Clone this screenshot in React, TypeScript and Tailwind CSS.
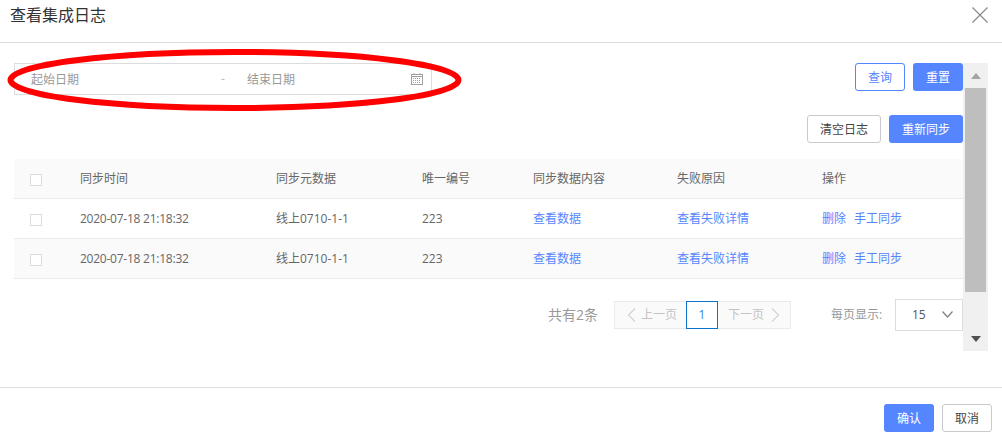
const FONT = "[font-family:'Open_Sans','Noto_Sans_CJK_SC',sans-serif]";

const ROWS = [
  { time: '2020-07-18 21:18:32', meta: '线上0710-1-1', code: '223', striped: false },
  { time: '2020-07-18 21:18:32', meta: '线上0710-1-1', code: '223', striped: true },
];

function Checkbox() {
  return <span className="mt-[2px] block size-3 border border-[#dcdcdc] bg-white" />;
}

function Button({ label, kind, width }: { label: string; kind: 'primary' | 'outline' | 'plain'; width: string }) {
  const look =
    kind === 'primary'
      ? 'bg-[#5586ff] text-white'
      : kind === 'outline'
        ? 'border border-[#5586ff] bg-white text-[#5586ff]'
        : 'border border-[#c8cad0] bg-white text-[#444]';
  return (
    <button className={`flex h-7 items-center justify-center rounded-[3px] pt-px text-xs ${width} ${look}`}>{label}</button>
  );
}

function CalendarIcon() {
  return (
    <svg className="shrink-0" width="12" height="12" viewBox="0 0 12 12" fill="none" stroke="#a0a0a0">
      <rect x="0.5" y="1.5" width="11" height="10" />
      <path d="M0.5 3.5h11M3 0v2M9 0v2" />
      <path d="M2 5.5h8M2 7.5h8M2 9.5h8" strokeDasharray="1 1" />
    </svg>
  );
}

function Scrollbar() {
  return (
    <div className="flex h-[288px] w-[25px] shrink-0 flex-col items-center bg-[#f0f0f0]">
      <div className="flex h-[25px] w-full items-center justify-center">
        <span className="border-x-[5.5px] border-b-[6px] border-x-transparent border-b-[#a3a3a3]" />
      </div>
      <div className="h-[204px] w-[21px] bg-[#bebebe]" />
      <div className="flex-1" />
      <div className="flex h-[25px] w-full items-center justify-center">
        <span className="border-x-[5.5px] border-t-[6px] border-x-transparent border-t-[#505050]" />
      </div>
    </div>
  );
}

export default function App() {
  return (
    <div className={`relative flex h-[442px] w-[1002px] flex-col overflow-hidden bg-white ${FONT}`}>
      <header className="flex h-[43px] shrink-0 items-start justify-between border-b border-[#dddddd] pl-[10px] pr-[14px]">
        <h1 className="pt-[3px] text-base leading-6 text-[#333]">查看集成日志</h1>
        <svg className="mt-[7px]" width="16" height="16" viewBox="0 0 16 16" fill="none" stroke="#8c8c8c" strokeWidth="1.3">
          <path d="M0.5 0.5l15 15M15.5 0.5l-15 15" />
        </svg>
      </header>

      <main className="flex flex-1 pl-[14px] pt-[20px]">
        <div className="w-[949px]">
          <div className="flex items-start justify-between">
            <div className="flex h-8 w-[418px] items-center border border-[#dddddd] pl-4 pr-2 text-xs text-[#999]">
              <span className="w-[190px] pt-px">起始日期</span>
              <span className="w-[26px] text-[#bbb]">-</span>
              <span className="flex-1 pt-px">结束日期</span>
              <CalendarIcon />
            </div>
            <div className="flex gap-2">
              <Button label="查询" kind="outline" width="w-[50px]" />
              <Button label="重置" kind="primary" width="w-[50px]" />
            </div>
          </div>

          <div className="mt-5 flex justify-end gap-2">
            <Button label="清空日志" kind="plain" width="w-[74px]" />
            <Button label="重新同步" kind="primary" width="w-[74px]" />
          </div>

          <table className="mt-4 w-full table-fixed border-collapse text-xs text-[#666]">
            <colgroup>
              <col className="w-[66px]" />
              <col className="w-[196px]" />
              <col className="w-[146px]" />
              <col className="w-[111px]" />
              <col className="w-[144px]" />
              <col className="w-[145px]" />
              <col />
            </colgroup>
            <thead>
              <tr className="h-[39px] border-b border-[#eaeaea] bg-[#fafafa] text-left [&>th]:pt-[2px]">
                <th className="pl-4 font-normal"><Checkbox /></th>
                <th className="font-normal">同步时间</th>
                <th className="font-normal">同步元数据</th>
                <th className="font-normal">唯一编号</th>
                <th className="font-normal">同步数据内容</th>
                <th className="font-normal">失败原因</th>
                <th className="font-normal">操作</th>
              </tr>
            </thead>
            <tbody>
              {ROWS.map((row, i) => (
                <tr key={i} className={`h-10 border-b border-[#eaeaea] [&>td]:pt-[2px] ${row.striped ? 'bg-[#fafafa]' : 'bg-white'}`}>
                  <td className="pl-4"><Checkbox /></td>
                  <td className="tracking-[-0.24px]">{row.time}</td>
                  <td>{row.meta}</td>
                  <td>{row.code}</td>
                  <td className="text-[#5586ff]">查看数据</td>
                  <td className="text-[#5586ff]">查看失败详情</td>
                  <td className="text-[#5586ff]">
                    <span className="mr-2">删除</span>
                    <span>手工同步</span>
                  </td>
                </tr>
              ))}
            </tbody>
          </table>

          <div className="mt-5 flex items-center justify-end text-xs text-[#999]">
            <span className="mr-4 text-sm">共有2条</span>
            <div className="flex h-7 items-center text-[#c4c4c4]">
              <span className="flex h-full w-[72px] items-center gap-[5px] border border-r-0 border-[#eaeaea] bg-[#fafafa] pl-3">
                <svg width="9" height="14" viewBox="0 0 9 14" fill="none" stroke="#d4d4d4" strokeWidth="1.2">
                  <path d="M8 0.5L1.5 7l6.5 6.5" />
                </svg>
                上一页
              </span>
              <span className="flex h-full w-8 items-center justify-center border border-[#0a72c9] bg-white text-[#2b85d6]">
                1
              </span>
              <span className="flex h-full w-[73px] items-center gap-[7px] border border-l-0 border-[#eaeaea] bg-[#fafafa] pl-[10px]">
                下一页
                <svg width="9" height="14" viewBox="0 0 9 14" fill="none" stroke="#d4d4d4" strokeWidth="1.2">
                  <path d="M1 0.5L7.5 7L1 13.5" />
                </svg>
              </span>
            </div>
            <span className="ml-10 w-[64px]">每页显示:</span>
            <div className="flex h-8 w-[68px] items-center justify-between border border-[#dddddd] pl-4 pr-[9px] text-[#555]">
              15
              <svg width="11" height="7" viewBox="0 0 11 7" fill="none" stroke="#808080" strokeWidth="1.2">
                <path d="M0.5 0.5l5 5.5l5-5.5" />
              </svg>
            </div>
          </div>
        </div>
        <Scrollbar />
      </main>

      <footer className="flex h-[55px] shrink-0 items-start justify-end gap-2 border-t border-[#dddddd] pr-[10px] pt-4">
        <Button label="确认" kind="primary" width="w-[50px]" />
        <Button label="取消" kind="plain" width="w-[50px]" />
      </footer>

      <svg className="absolute left-[7px] top-[48px]" width="456" height="64" viewBox="0 0 456 64" fill="none">
        <ellipse cx="227.5" cy="32" rx="224" ry="28" stroke="#ff0000" strokeWidth="6" />
      </svg>
    </div>
  );
}
